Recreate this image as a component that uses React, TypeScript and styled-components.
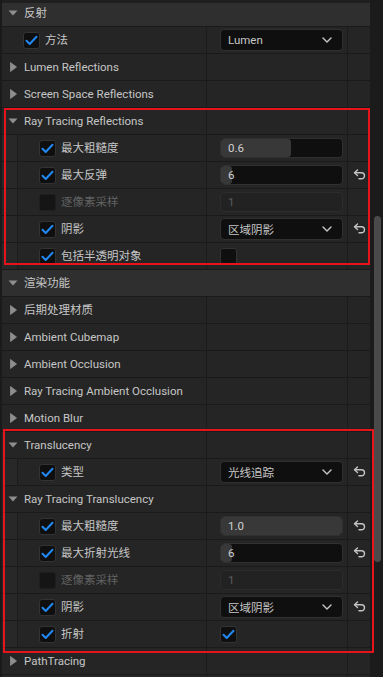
import React from "react";
import styled, { createGlobalStyle } from "styled-components";

type Value =
  | { type: "combo"; text: string }
  | { type: "number"; text: string; fill: number; disabled?: boolean }
  | { type: "check"; checked: boolean };

type Item =
  | { kind: "section"; label: string }
  | { kind: "group"; label: string; open?: boolean }
  | {
      kind: "prop";
      label: string;
      indent?: boolean;
      enabled: boolean;
      value: Value;
      reset?: boolean;
    };

const items: Item[] = [
  { kind: "section", label: "反射" },
  { kind: "prop", label: "方法", enabled: true, value: { type: "combo", text: "Lumen" } },
  { kind: "group", label: "Lumen Reflections" },
  { kind: "group", label: "Screen Space Reflections" },
  { kind: "group", label: "Ray Tracing Reflections", open: true },
  { kind: "prop", label: "最大粗糙度", indent: true, enabled: true, value: { type: "number", text: "0.6", fill: 0.58 } },
  { kind: "prop", label: "最大反弹", indent: true, enabled: true, value: { type: "number", text: "6", fill: 0.09 }, reset: true },
  { kind: "prop", label: "逐像素采样", indent: true, enabled: false, value: { type: "number", text: "1", fill: 0, disabled: true } },
  { kind: "prop", label: "阴影", indent: true, enabled: true, value: { type: "combo", text: "区域阴影" }, reset: true },
  { kind: "prop", label: "包括半透明对象", indent: true, enabled: true, value: { type: "check", checked: false } },
  { kind: "section", label: "渲染功能" },
  { kind: "group", label: "后期处理材质" },
  { kind: "group", label: "Ambient Cubemap" },
  { kind: "group", label: "Ambient Occlusion" },
  { kind: "group", label: "Ray Tracing Ambient Occlusion" },
  { kind: "group", label: "Motion Blur" },
  { kind: "group", label: "Translucency", open: true },
  { kind: "prop", label: "类型", indent: true, enabled: true, value: { type: "combo", text: "光线追踪" }, reset: true },
  { kind: "group", label: "Ray Tracing Translucency", open: true },
  { kind: "prop", label: "最大粗糙度", indent: true, enabled: true, value: { type: "number", text: "1.0", fill: 1 }, reset: true },
  { kind: "prop", label: "最大折射光线", indent: true, enabled: true, value: { type: "number", text: "6", fill: 0.09 }, reset: true },
  { kind: "prop", label: "逐像素采样", indent: true, enabled: false, value: { type: "number", text: "1", fill: 0, disabled: true } },
  { kind: "prop", label: "阴影", indent: true, enabled: true, value: { type: "combo", text: "区域阴影" }, reset: true },
  { kind: "prop", label: "折射", indent: true, enabled: true, value: { type: "check", checked: true } },
  { kind: "group", label: "PathTracing" },
  { kind: "group", label: "" },
];

const GlobalStyle = createGlobalStyle`
  html, body {
    margin: 0;
    padding: 0;
    background: #1a1a1a;
  }
  body {
    font-family: Roboto, "Noto Sans CJK SC", sans-serif;
    -webkit-font-smoothing: antialiased;
  }
`;

const Page = styled.div`
  position: relative;
  display: flex;
  width: 383px;
  height: 677px;
  overflow: hidden;
  background: #1a1a1a;
`;

const List = styled.div`
  width: 368px;
  padding-left: 2px;
  display: flex;
  flex-direction: column;
`;

const Track = styled.div`
  width: 13px;
  display: flex;
  justify-content: center;
  background: #1b1b1b;
`;

const Thumb = styled.div`
  width: 7px;
  height: 346px;
  margin-top: 216px;
  margin-left: 2px;
  border-radius: 4px;
  background: #4a4a4a;
`;

const SectionRow = styled.div`
  flex: none;
  height: 27px;
  box-sizing: border-box;
  display: flex;
  align-items: center;
  background: #2f2f2f;
  border-bottom: 1px solid #1a1a1a;

  &:first-child {
    box-shadow: inset 0 3px 0 #1f1f1f;
  }
`;

const Row = styled.div`
  flex: none;
  height: 27px;
  box-sizing: border-box;
  display: flex;
  background: #252525;
  border-bottom: 1px solid #1a1a1a;
`;

const NameCell = styled.div`
  width: 205px;
  box-sizing: border-box;
  display: flex;
  align-items: center;
  border-right: 1px solid #1c1c1c;
`;

const ValueCell = styled.div`
  width: 141px;
  box-sizing: border-box;
  display: flex;
  align-items: center;
  padding-left: 13px;
  border-right: 1px solid #1c1c1c;
`;

const ResetCell = styled.div`
  flex: 1;
  display: flex;
  align-items: center;
  justify-content: center;
  color: #c4c4c4;
`;

const Arrow = styled.span`
  width: 22px;
  display: flex;
  justify-content: center;
  align-items: center;
  flex: none;
  color: #8e8e8e;
`;

const Label = styled.span<{ $dim?: boolean }>`
  font-size: 11.5px;
  line-height: 14px;
  color: ${(p) => (p.$dim ? "#626262" : "#c6c6c6")};
  white-space: nowrap;
`;

const Indent = styled.div`
  width: 16px;
  align-self: stretch;
  box-sizing: border-box;
  background: #282828;
  border-right: 1px solid #1c1c1c;
  flex: none;
`;

const PropName = styled.div`
  display: flex;
  align-items: center;
  gap: 5px;
  padding-left: 21px;
`;

const Box = styled.div<{ $dim?: boolean }>`
  width: 17px;
  height: 17px;
  box-sizing: border-box;
  border-radius: 3px;
  background: ${(p) => (p.$dim ? "#151515" : "#0f0f0f")};
  border: 1px solid ${(p) => (p.$dim ? "#1e1e1e" : "#333333")};
  display: flex;
  align-items: center;
  justify-content: center;
  flex: none;
`;

const Combo = styled.div`
  width: 123px;
  height: 22px;
  box-sizing: border-box;
  border-radius: 4px;
  background: #0f0f0f;
  border: 1px solid #303030;
  display: flex;
  align-items: center;
  justify-content: space-between;
  padding: 0 10px 0 7px;
  font-size: 11.5px;
  color: #c6c6c6;
`;

const Spin = styled.div<{ $disabled?: boolean }>`
  position: relative;
  width: 123px;
  height: 20px;
  box-sizing: border-box;
  border-radius: 4px;
  overflow: hidden;
  background: ${(p) => (p.$disabled ? "#222222" : "#0f0f0f")};
  border: 1px solid ${(p) => (p.$disabled ? "#2c2c2c" : "#303030")};
  display: flex;
  align-items: center;
`;

const SpinFill = styled.div`
  position: absolute;
  left: 0;
  top: 0;
  bottom: 0;
  background: #383838;
  border-radius: 3px;
`;

const SpinText = styled.span<{ $disabled?: boolean }>`
  position: relative;
  padding-left: 7px;
  font-size: 11.5px;
  color: ${(p) => (p.$disabled ? "#5c5c5c" : "#d0d0d0")};
`;

const Annotation = styled.div`
  position: absolute;
  box-sizing: border-box;
  border: 2px solid #e8141c;
  pointer-events: none;
`;

function Check() {
  return (
    <svg width="13" height="11" viewBox="0 0 13 11">
      <path d="M1.5 5.8 L4.7 9 L11.5 1.8" fill="none" stroke="#2288f4" strokeWidth="2" strokeLinecap="round" strokeLinejoin="round" />
    </svg>
  );
}

function Checkbox({ checked, dim }: { checked: boolean; dim?: boolean }) {
  return <Box $dim={dim}>{checked && <Check />}</Box>;
}

function Triangle({ open }: { open?: boolean }) {
  return open ? (
    <svg width="10" height="6" viewBox="0 0 10 6">
      <path d="M0.5 0.5 H9.5 L5 5.5 Z" fill="currentColor" />
    </svg>
  ) : (
    <svg width="7" height="10" viewBox="0 0 7 10">
      <path d="M0.5 0.5 L6.5 5 L0.5 9.5 Z" fill="currentColor" strokeLinejoin="round" stroke="currentColor" strokeWidth="0.8" />
    </svg>
  );
}

function Chevron() {
  return (
    <svg width="10" height="6" viewBox="0 0 10 6">
      <path d="M1 1 L5 5 L9 1" fill="none" stroke="#c8c8c8" strokeWidth="1.4" strokeLinecap="round" strokeLinejoin="round" />
    </svg>
  );
}

function ResetIcon() {
  return (
    <svg width="13" height="12" viewBox="0 0 13 12">
      <path d="M4.5 1 L1.5 3.8 L4.5 6.6" fill="none" stroke="currentColor" strokeWidth="1.4" strokeLinecap="round" strokeLinejoin="round" />
      <path d="M2 3.8 H8.5 A3 3 0 0 1 8.5 9.8 H6" fill="none" stroke="currentColor" strokeWidth="1.4" strokeLinecap="round" />
    </svg>
  );
}

function ValueView({ value }: { value: Value }) {
  if (value.type === "combo") {
    return (
      <Combo>
        <span>{value.text}</span>
        <Chevron />
      </Combo>
    );
  }
  if (value.type === "number") {
    return (
      <Spin $disabled={value.disabled}>
        {value.fill > 0 && <SpinFill style={{ width: `${value.fill * 100}%` }} />}
        <SpinText $disabled={value.disabled}>{value.text}</SpinText>
      </Spin>
    );
  }
  return <Checkbox checked={value.checked} />;
}

function ItemRow({ item }: { item: Item }) {
  if (item.kind === "section") {
    return (
      <SectionRow>
        <Arrow>
          <Triangle open />
        </Arrow>
        <Label>{item.label}</Label>
      </SectionRow>
    );
  }
  if (item.kind === "group") {
    return (
      <Row>
        <NameCell>
          {item.label && (
            <>
              <Arrow>
                <Triangle open={item.open} />
              </Arrow>
              <Label>{item.label}</Label>
            </>
          )}
        </NameCell>
        <ValueCell />
        <ResetCell />
      </Row>
    );
  }
  return (
    <Row>
      <NameCell>
        {item.indent && <Indent />}
        <PropName>
          <Checkbox checked={item.enabled} dim={!item.enabled} />
          <Label $dim={!item.enabled}>{item.label}</Label>
        </PropName>
      </NameCell>
      <ValueCell>
        <ValueView value={item.value} />
      </ValueCell>
      <ResetCell>{item.reset && <ResetIcon />}</ResetCell>
    </Row>
  );
}

export default function App() {
  return (
    <>
      <GlobalStyle />
      <Page>
        <List>
          {items.map((item, i) => (
            <ItemRow key={i} item={item} />
          ))}
        </List>
        <Track>
          <Thumb />
        </Track>
        <Annotation style={{ left: 4, top: 108, width: 366, height: 157 }} />
        <Annotation style={{ left: 3, top: 429, width: 371, height: 224 }} />
      </Page>
    </>
  );
}
